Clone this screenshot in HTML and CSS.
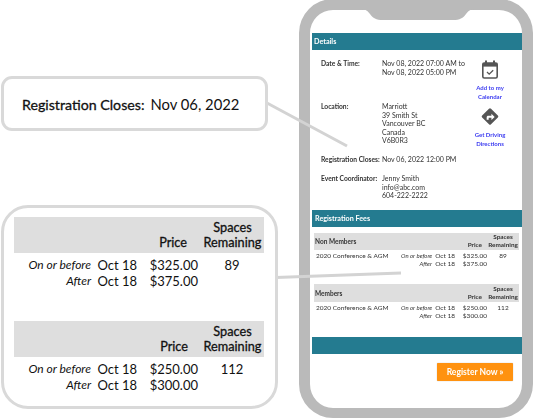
FILE: index.html
```html
<!DOCTYPE html>
<html lang="en">
<head>
<meta charset="utf-8">
<title>Registration details</title>
<link rel="stylesheet" href="styles.css">
</head>
<body>
<div class="canvas">
  <div class="phone">
    <svg class="notch" width="118" height="12" viewBox="0 0 118 12"><path d="M0 0C6 0 8 1 11 5C14 9 17 11 24 11H94C101 11 104 9 107 5C110 1 112 0 118 0Z" fill="#bababa"/></svg>
    <div class="screen">
      <div class="band band-details">Details</div>
      <div class="details">
        <div class="info">
          <div class="row row-date"><div class="key">Date &amp; Time:</div><div>Nov 08, 2022 07:00 AM to<br>Nov 08, 2022 05:00 PM</div></div>
          <div class="row row-loc"><div class="key">Location:</div><div>Marriott<br>39 Smith St<br>Vancouver BC<br>Canada<br>V6B0R3</div></div>
          <div class="row row-reg"><div class="key">Registration Closes:</div><div>Nov 06, 2022 12:00 PM</div></div>
          <div class="row"><div class="key">Event Coordinator:</div><div>Jenny Smith<br>info@abc.com<br>604-222-2222</div></div>
        </div>
        <div class="actions">
          <svg class="icon-cal" width="18" height="19" viewBox="0 0 18 19"><rect x="1.800" y="3" width="14.400" height="15" rx="1.500" fill="none" stroke="#555" stroke-width="1.600"/><rect x="1.800" y="3" width="14.400" height="3.600" fill="#555"/><rect x="4" y="0.500" width="2" height="4" fill="#555"/><rect x="12" y="0.500" width="2" height="4" fill="#555"/><path d="M6 12l2.200 2.200 4-4" fill="none" stroke="#555" stroke-width="1.300"/></svg>
          <div class="action-link">Add to my<br>Calendar</div>
          <svg class="icon-dir" width="20" height="19" viewBox="0 0 20 20"><rect x="3.400" y="3.400" width="13.200" height="13.200" rx="1.500" transform="rotate(45 10 10)" fill="#555"/><path d="M6.500 13.500v-2.600c0-1 .7-1.700 1.700-1.700h3.300V7l3.400 3.400-3.400 3.400v-2.400H8.600v2.100z" fill="#fff"/></svg>
          <div class="action-link">Get Driving<br>Directions</div>
        </div>
      </div>
      <div class="band band-fees">Registration Fees</div>
      <table class="fees fees-first">
        <tr class="head"><th class="name">Non Members</th><th></th><th></th><th class="price">Price</th><th class="spaces">Spaces<br>Remaining</th></tr>
        <tr class="first"><td class="cname">2020 Conference &amp; AGM</td><td class="when"><i>On or before</i></td><td class="date">Oct 18</td><td class="amt">$325.00</td><td class="num">89</td></tr>
        <tr><td></td><td class="when"><i>After</i></td><td class="date">Oct 18</td><td class="amt">$375.00</td><td></td></tr>
      </table>
      <table class="fees fees-second">
        <tr class="head"><th class="name">Members</th><th></th><th></th><th class="price">Price</th><th class="spaces">Spaces<br>Remaining</th></tr>
        <tr class="first"><td class="cname">2020 Conference &amp; AGM</td><td class="when"><i>On or before</i></td><td class="date">Oct 18</td><td class="amt">$250.00</td><td class="num">112</td></tr>
        <tr><td></td><td class="when"><i>After</i></td><td class="date">Oct 18</td><td class="amt">$300.00</td><td></td></tr>
      </table>
      <div class="band band-empty"></div>
      <div class="register"><div class="btn">Register Now »</div></div>
    </div>
  </div>

  <svg class="lines" width="533" height="419" viewBox="0 0 533 419"><path d="M267 103L347 146M276 277.500L401 273" fill="none" stroke="#d3d3d3" stroke-width="3"/></svg>

  <div class="callout callout-top"><b>Registration Closes:</b><span>Nov 06, 2022</span></div>

  <div class="callout callout-fees">
    <table class="big">
      <tr class="head"><th></th><th></th><th class="price">Price</th><th class="spaces">Spaces<br>Remaining</th></tr>
      <tr class="first"><td class="when"><i>On or before</i></td><td class="date">Oct 18</td><td class="amt">$325.00</td><td class="num">89</td></tr>
      <tr><td class="when"><i>After</i></td><td class="date">Oct 18</td><td class="amt">$375.00</td><td></td></tr>
    </table>
    <table class="big big-second">
      <tr class="head"><th></th><th></th><th class="price price-second">Price</th><th class="spaces">Spaces<br>Remaining</th></tr>
      <tr class="first"><td class="when"><i>On or before</i></td><td class="date">Oct 18</td><td class="amt">$250.00</td><td class="num">112</td></tr>
      <tr><td class="when"><i>After</i></td><td class="date">Oct 18</td><td class="amt">$300.00</td><td></td></tr>
    </table>
  </div>
</div>
</body>
</html>
```

FILE: styles.css
```css
* { box-sizing: border-box; }
html, body { margin: 0; padding: 0; background: #fff; }
body { font-family: Lato, "Open Sans", sans-serif; color: #222; overflow: hidden; }
.canvas { position: relative; width: 533px; height: 419px; overflow: hidden; }

/* phone */
.phone { position: absolute; left: 299px; top: -1px; width: 234px; height: 419px; border: 11px solid #bababa; border-bottom-width: 10px; border-radius: 34px; background: #fff; }
.notch { position: absolute; left: 49px; top: -1px; }
.screen { padding: 23px 0 0 2px; font-size: 7px; line-height: 8.500px; color: #333; filter: blur(0.3px); }
.band { background: #247b90; color: #fff; font-weight: 700; font-size: 7.200px; height: 17px; line-height: 17px; padding-left: 2px; }
.band-fees { padding-left: 3px; }

.details { display: flex; height: 160px; padding: 9px 0 0 9px; }
.info { width: 151px; }
.row { display: flex; }
.key { width: 61px; flex: none; font-weight: 700; font-size: 6.700px; white-space: nowrap; }
.row-date { height: 43px; }
.row-loc { height: 53px; }
.row-reg { height: 19px; }
.actions { width: 36px; display: flex; flex-direction: column; align-items: center; }
.icon-cal { margin-top: 1px; }
.icon-dir { margin-top: 6px; }
.action-link { color: #3a3af0; font-weight: 700; font-size: 6px; text-align: center; line-height: 8.500px; margin-top: 5px; white-space: nowrap; }

table { border-collapse: collapse; border-spacing: 0; }
.fees { width: 205px; margin-left: 2px; table-layout: fixed; font-size: 6.500px; line-height: 8px; }
.fees-first { margin-top: 6px; }
.fees-second { margin-top: 16px; }
.fees th, .fees td { padding: 0; vertical-align: top; font-weight: 400; white-space: nowrap; }
.fees .head th { background: #dedede; font-weight: 700; height: 17px; vertical-align: bottom; color: #333; }
.fees-second .head th { height: 18px; }
.fees .head th.name { text-align: left; vertical-align: middle; padding: 1px 0 0 1px; }
.fees .head th.price { text-align: right; padding-right: 5px; padding-bottom: 1px; font-size: 6.400px; }
.fees .head th.spaces { text-align: center; font-size: 6.400px; padding-bottom: 1px; }
.fees .first td { padding-top: 2px; }
.fees .cname { padding-left: 2px; }
.fees .when { text-align: right; font-size: 6px; }
.fees .date { text-align: right; padding-right: 1px; }
.fees .amt { text-align: right; }
.fees .num { text-align: center; }
.fees th:nth-child(1) { width: 87px; }
.fees th:nth-child(2) { width: 31px; }
.fees th:nth-child(3) { width: 24px; }
.fees th:nth-child(4) { width: 31px; }
.fees th:nth-child(5) { width: 32px; }

.band-empty { margin-top: 17px; }
.register { display: flex; justify-content: flex-end; padding: 9px 9px 0 0; }
.btn { width: 76px; height: 18px; line-height: 18px; background: #ff9210; color: #fff; font-weight: 700; font-size: 8.500px; text-align: center; border-radius: 1px; box-shadow: 0 0 1px #999; }

.lines { position: absolute; left: 0; top: 0; pointer-events: none; }

/* callouts */
.callout { position: absolute; left: 1px; background: #fff; border: 3px solid #d9d9d9; color: #111; }
.callout-top { top: 76px; width: 267px; height: 55px; border-radius: 11px; padding-left: 18px; line-height: 49px; white-space: nowrap; }
.callout-top b { font-weight: 400; -webkit-text-stroke: 0.3px #111; font-size: 14.200px; margin-right: 6px; }
.callout-top span { font-size: 14.800px; }
.callout-fees { top: 205px; width: 277px; height: 204px; border-radius: 27px; padding: 9px 0 0 10px; }
.big { width: 250px; table-layout: fixed; font-size: 13px; line-height: 16px; }
.big th, .big td { padding: 0; font-weight: 400; vertical-align: top; white-space: nowrap; }
.big .when { font-size: 12px; }
.big .head th { background: #dedede; font-weight: 400; -webkit-text-stroke: 0.3px #111; font-size: 12.700px; height: 36px; line-height: 15px; vertical-align: bottom; padding-bottom: 3px; }
.big th:nth-child(1) { width: 77px; }
.big th:nth-child(2) { width: 47px; }
.big th:nth-child(3) { width: 62px; }
.big th:nth-child(4) { width: 64px; }
.big .head th.price { text-align: right; padding-right: 13px; }
.big .head th.price-second { padding-right: 12px; }
.big .head th.spaces { text-align: center; padding-left: 1px; }
.big .first td { padding-top: 4px; }
.big .when { text-align: right; }
.big .date { text-align: right; padding-right: 1px; }
.big .amt { text-align: right; padding-right: 2px; }
.big .num { text-align: center; }
.big-second { margin-top: 32px; }
```
